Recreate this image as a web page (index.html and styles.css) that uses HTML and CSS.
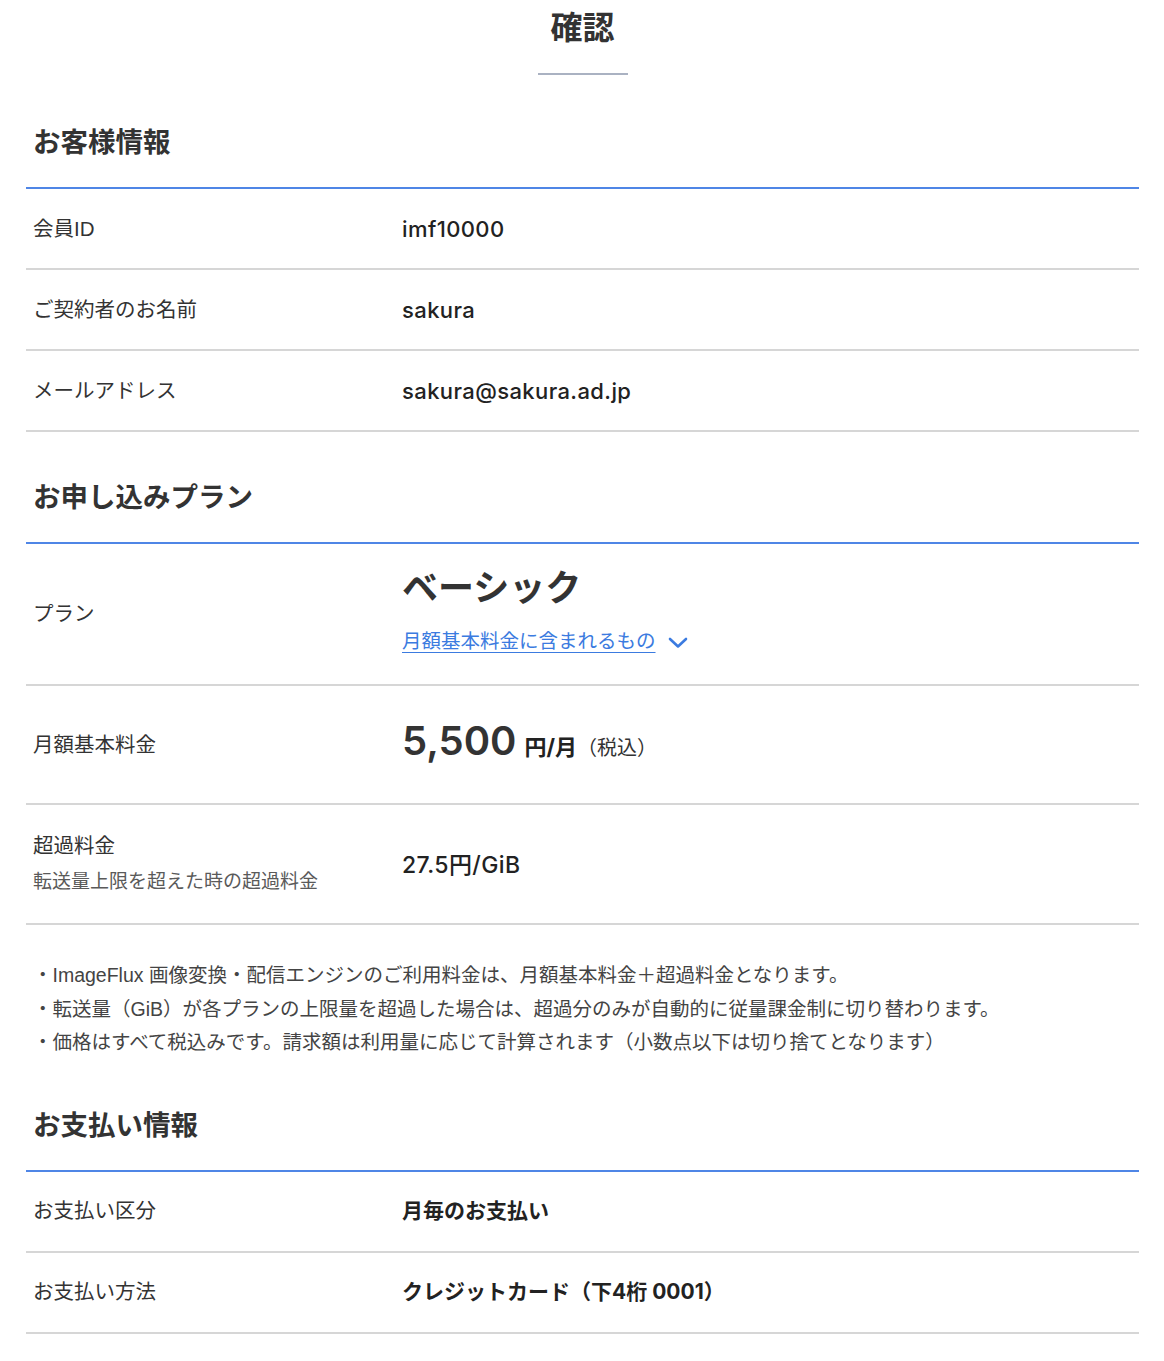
FILE: index.html
```html
<!DOCTYPE html>
<html lang="ja">
<head>
    <meta charset="UTF-8">
    <meta name="viewport" content="width=device-width, initial-scale=1.0">
    <title>確認</title>
    <link rel="stylesheet" href="styles.css">
</head>
<body>
    <div class="page">
        <h1 class="page-title">確認</h1>

        <section class="block">
            <h2 class="block-title">お客様情報</h2>
            <div class="row">
                <div class="row-label">会員ID</div>
                <div class="row-value">imf10000</div>
            </div>
            <div class="row">
                <div class="row-label">ご契約者のお名前</div>
                <div class="row-value">sakura</div>
            </div>
            <div class="row">
                <div class="row-label">メールアドレス</div>
                <div class="row-value">sakura@sakura.ad.jp</div>
            </div>
        </section>

        <section class="block">
            <h2 class="block-title">お申し込みプラン</h2>
            <div class="row row-plan">
                <div class="row-label">プラン</div>
                <div class="row-value">
                    <div class="plan-name">ベーシック</div>
                    <a class="plan-link" href="#">
                        <span class="plan-link-text">月額基本料金に含まれるもの</span>
                        <svg class="chevron" width="20" height="12" viewBox="0 0 20 12">
                            <path d="M2 2 L10 9.5 L18 2" fill="none" stroke="#3b7be0" stroke-width="2.6" stroke-linecap="round" stroke-linejoin="round"/>
                        </svg>
                    </a>
                </div>
            </div>
            <div class="row row-price">
                <div class="row-label">月額基本料金</div>
                <div class="row-value price-box">
                    <span class="price">5,500</span><span class="price-unit">円/月</span><span class="price-tax">（税込）</span>
                </div>
            </div>
            <div class="row row-over">
                <div class="row-label">
                    超過料金
                    <div class="row-sub">転送量上限を超えた時の超過料金</div>
                </div>
                <div class="row-value value-md">27.5円/GiB</div>
            </div>
            <ul class="notes">
                <li>・ImageFlux 画像変換・配信エンジンのご利用料金は、月額基本料金＋超過料金となります。</li>
                <li>・転送量（GiB）が各プランの上限量を超過した場合は、超過分のみが自動的に従量課金制に切り替わります。</li>
                <li>・価格はすべて税込みです。請求額は利用量に応じて計算されます（小数点以下は切り捨てとなります）</li>
            </ul>
        </section>

        <section class="block">
            <h2 class="block-title">お支払い情報</h2>
            <div class="row">
                <div class="row-label">お支払い区分</div>
                <div class="row-value value-bold">月毎のお支払い</div>
            </div>
            <div class="row">
                <div class="row-label">お支払い方法</div>
                <div class="row-value value-bold">クレジットカード（下4桁 0001）</div>
            </div>
        </section>
    </div>
</body>
</html>
```

FILE: styles.css
```css
body {
    margin: 0;
    background-color: #fff;
    color: #333;
    font-family: "Liberation Sans", "Noto Sans CJK JP", sans-serif;
}
.page {
    padding: 0 25px 0 26px;
}
.page-title {
    margin: 0 0 2px;
    font-size: 32px;
    line-height: 56px;
    font-weight: bold;
    text-align: center;
    color: #333;
}
.page-title::after {
    content: "";
    display: block;
    width: 90px;
    height: 2px;
    margin: 17px auto 0;
    background-color: #aab2c2;
}
.block-title {
    margin: 0;
    padding: 46px 7px 24px;
    font-size: 27.5px;
    line-height: 40px;
    font-weight: bold;
    color: #333;
    border-bottom: 2px solid #4f86e6;
}
.row {
    display: flex;
    align-items: center;
    min-height: 79px;
    padding: 0 7px;
    border-bottom: 2px solid #d6d6d6;
}
.row-label {
    width: 369px;
    flex-shrink: 0;
    font-size: 20.5px;
    line-height: 30px;
    color: #333;
}
.row-value {
    font-family: Inter, "Noto Sans CJK JP", sans-serif;
    font-size: 22px;
    line-height: 30px;
    font-weight: 500;
    letter-spacing: 0.4px;
    color: #222;
}
.row-sub {
    margin-top: 6px;
    font-size: 19px;
    line-height: 30px;
    color: #5a5a5a;
}
.row-plan {
    min-height: 140px;
}
.row-plan .row-value {
    padding: 22px 0 29px;
    letter-spacing: 0;
}
.plan-name {
    font-family: "Liberation Sans", "Noto Sans CJK JP", sans-serif;
    font-size: 36px;
    line-height: 44px;
    font-weight: bold;
    color: #333;
}
.plan-link {
    display: inline-flex;
    align-items: center;
    gap: 12px;
    margin-top: 16px;
    font-family: "Liberation Sans", "Noto Sans CJK JP", sans-serif;
    font-size: 19.5px;
    line-height: 28px;
    font-weight: normal;
    color: #3b7be0;
    text-decoration: none;
}
.plan-link-text {
    text-decoration: underline;
    text-underline-offset: 4px;
}
.chevron {
    margin-top: 4px;
}
.row-price {
    min-height: 117px;
}
.price-box {
    padding-bottom: 8px;
    letter-spacing: 0;
}
.price {
    font-size: 40px;
    line-height: 50px;
    font-weight: 600;
    color: #333;
}
.price-unit {
    margin-left: 8px;
    font-size: 22px;
    font-weight: bold;
}
.price-tax {
    font-family: "Liberation Sans", "Noto Sans CJK JP", sans-serif;
    font-size: 20px;
    font-weight: normal;
    color: #333;
}
.row-over {
    min-height: 118px;
}
.value-md {
    font-size: 23px;
    margin-top: 2px;
}
.value-bold {
    font-size: 21px;
    font-weight: bold;
    letter-spacing: 0;
}
.notes {
    list-style: none;
    margin: 0;
    padding: 34px 7px 0;
    font-size: 19.5px;
    line-height: 33.5px;
    color: #444;
}
```
